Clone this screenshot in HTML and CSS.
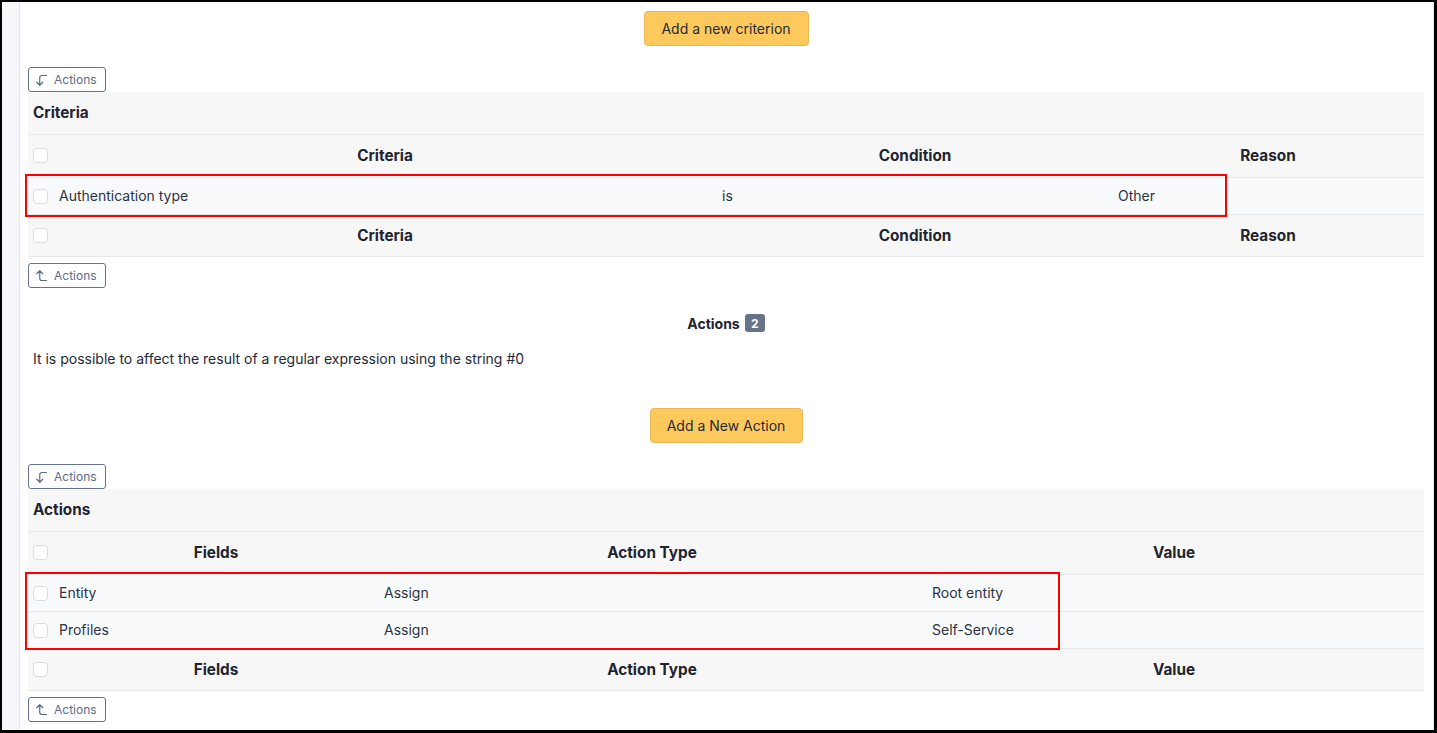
FILE: index.html
```html
<!DOCTYPE html>
<html lang="en">
<head>
<meta charset="utf-8">
<title>Rule</title>
<link rel="stylesheet" href="styles.css">
</head>
<body>
<div class="screen">
  <div class="sidebar"></div>
  <main class="main">
    <div class="center-row first">
      <button class="btn-yellow crit">Add a new criterion</button>
    </div>

    <button class="btn-actions top-gap">
      <svg viewBox="0 0 24 24" class="ico"><path d="M18 6h-6a3 3 0 0 0 -3 3v10l-4 -4m8 0l-4 4"/></svg>
      Actions
    </button>
    <div class="card-head">Criteria</div>
    <div class="table t-crit">
      <div class="row head">
        <div class="cb-cell"><span class="cb"></span></div>
        <div class="hc">Criteria</div>
        <div class="hc">Condition</div>
        <div class="hc">Reason</div>
      </div>
      <div class="body">
        <div class="row data">
          <div class="cb-cell"><span class="cb"></span></div>
          <div class="dc">Authentication type</div>
          <div class="dc">is</div>
          <div class="dc">Other</div>
        </div>
        <div class="mark mark-crit"></div>
      </div>
      <div class="row head foot">
        <div class="cb-cell"><span class="cb"></span></div>
        <div class="hc">Criteria</div>
        <div class="hc">Condition</div>
        <div class="hc">Reason</div>
      </div>
    </div>
    <button class="btn-actions after">
      <svg viewBox="0 0 24 24" class="ico"><path d="M18 18h-6a3 3 0 0 1 -3 -3v-10l-4 4m8 0l-4 -4"/></svg>
      Actions
    </button>

    <h2 class="section-title">Actions <span class="badge">2</span></h2>
    <p class="note">It is possible to affect the result of a regular expression using the string #0</p>

    <div class="center-row">
      <button class="btn-yellow act">Add a New Action</button>
    </div>

    <button class="btn-actions top-gap2">
      <svg viewBox="0 0 24 24" class="ico"><path d="M18 6h-6a3 3 0 0 0 -3 3v10l-4 -4m8 0l-4 4"/></svg>
      Actions
    </button>
    <div class="card-head">Actions</div>
    <div class="table t-act">
      <div class="row head">
        <div class="cb-cell"><span class="cb"></span></div>
        <div class="hc">Fields</div>
        <div class="hc">Action Type</div>
        <div class="hc">Value</div>
      </div>
      <div class="body">
        <div class="row data">
          <div class="cb-cell"><span class="cb"></span></div>
          <div class="dc">Entity</div>
          <div class="dc">Assign</div>
          <div class="dc">Root entity</div>
        </div>
        <div class="row data">
          <div class="cb-cell"><span class="cb"></span></div>
          <div class="dc">Profiles</div>
          <div class="dc">Assign</div>
          <div class="dc">Self-Service</div>
        </div>
        <div class="mark mark-act"></div>
      </div>
      <div class="row head foot">
        <div class="cb-cell"><span class="cb"></span></div>
        <div class="hc">Fields</div>
        <div class="hc">Action Type</div>
        <div class="hc">Value</div>
      </div>
    </div>
    <button class="btn-actions after">
      <svg viewBox="0 0 24 24" class="ico"><path d="M18 18h-6a3 3 0 0 1 -3 -3v-10l-4 4m8 0l-4 -4"/></svg>
      Actions
    </button>
  </main>
</div>
</body>
</html>
```

FILE: styles.css
```css
* { box-sizing: border-box; }
html, body { margin: 0; padding: 0; }
body {
  font-family: Inter, "Noto Sans", "Liberation Sans", sans-serif;
  color: #1f2937;
  font-size: 14px;
  background: #fff;
}
.screen {
  width: 1437px;
  height: 733px;
  border-style: solid;
  border-color: #000;
  border-width: 2px 3px 3px 2px;
  display: flex;
  overflow: hidden;
}
.sidebar {
  width: 18px;
  flex: none;
  background: #f5f7fb;
  border-right: 1px solid #e3e6ec;
}
.main {
  flex: 1;
  background: #fff;
  border-right: 1px solid #e6e8ee;
  padding: 0 9px 0 8px;
  display: flex;
  flex-direction: column;
  align-items: flex-start;
}
.center-row {
  width: 100%;
  display: flex;
  justify-content: center;
}
.center-row.first { margin-top: 9px; }
.btn-yellow {
  font-family: inherit;
  font-size: 14px;
  color: #1f2937;
  background: #fec95c;
  border: 1px solid #e9b755;
  border-radius: 4px;
  height: 35px;
  padding: 0 16px;
  cursor: pointer;
}
.btn-yellow.crit { width: 165px; }
.btn-yellow.act { width: 153px; margin-top: 41px; }
.btn-actions {
  font-family: inherit;
  font-size: 12px;
  color: #5e6c89;
  background: #fff;
  border: 1px solid #66738f;
  border-radius: 3px;
  height: 25px;
  width: 78px;
  padding: 0 0 0 4px;
  display: flex;
  align-items: center;
  gap: 3px;
  cursor: pointer;
}
.btn-actions.top-gap { margin-top: 21px; }
.btn-actions.top-gap2 { margin-top: 21px; }
.btn-actions.after { margin-top: 6px; }
.ico {
  width: 18px;
  height: 18px;
  flex: none;
  fill: none;
  stroke: #5e6c89;
  stroke-width: 1.6;
  stroke-linecap: round;
  stroke-linejoin: round;
}
.card-head {
  width: 100%;
  height: 42px;
  background: #f7f7f7;
  font-weight: 700;
  font-size: 15.3px;
  padding: 0 5px 2px;
  display: flex;
  align-items: center;
  color: #1f2430;
}
.table { width: 100%; }
.row {
  display: grid;
  align-items: center;
  border-top: 1px solid #e7e8eb;
}
.t-crit .row { grid-template-columns: 24px 666px 394px 1fr; }
.t-act .row { grid-template-columns: 24px 328px 544px 1fr; }
.row.head { height: 43px; background: #f7f7f7; }
.row.foot { border-bottom: 1px solid #e7e8eb; }
.row.data { height: 37px; background: #f9fafc; }
.body { position: relative; }
.cb-cell { padding-left: 5px; display: flex; align-items: center; }
.cb {
  display: block;
  width: 15px;
  height: 15px;
  border: 1px solid #d9dce1;
  border-radius: 4px;
  background: #fff;
}
.row.head .cb-cell { padding-bottom: 2px; }
.hc {
  text-align: center;
  font-weight: 700;
  font-size: 15.3px;
  color: #1f2430;
  padding-bottom: 2px;
}
.row.foot .hc { padding-bottom: 0; }
.row.foot .cb-cell { padding-bottom: 1px; }
.dc {
  padding-left: 7px;
  color: #2b3445;
  padding-bottom: 1px;
}
.t-crit .row.data .dc:nth-child(3) { padding-left: 4px; }
.t-crit .row.data .dc:nth-child(4) { padding-left: 6px; }
.t-act .row.data .dc:nth-child(3) { padding-left: 4px; }
.t-act .row.data .dc:nth-child(4) { padding-left: 8px; }
.mark {
  position: absolute;
  border: 2px solid #f00;
  pointer-events: none;
}
.mark-crit { left: -3px; top: -3px; width: 1202px; height: 43px; }
.mark-act { left: -3px; top: -2px; width: 1035px; height: 78px; }
.section-title {
  width: 100%;
  margin: 26px 0 0;
  text-align: center;
  font-size: 14px;
  font-weight: 700;
  color: #1f2430;
  display: flex;
  justify-content: center;
  align-items: center;
  gap: 5px;
  height: 18px;
}
.badge {
  display: inline-flex;
  align-items: center;
  justify-content: center;
  background: #667389;
  color: #fff;
  font-size: 12px;
  font-weight: 700;
  border-radius: 3px;
  width: 20px;
  height: 18px;
}
.note {
  margin: 18px 0 0 5px;
  font-size: 14px;
  color: #1f2937;
  line-height: 17px;
}
```
